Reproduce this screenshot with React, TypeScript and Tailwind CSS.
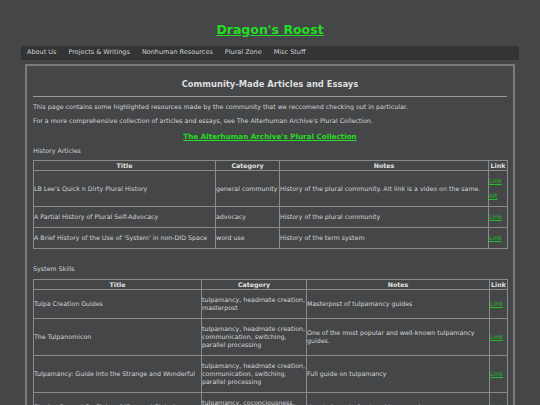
import React from "react";

type Row = {
  title: string;
  category: string;
  notes: string;
  links: string[];
};

const historyArticles: Row[] = [
  {
    title: "LB Lee's Quick n Dirty Plural History",
    category: "general community",
    notes: "History of the plural community. Alt link is a video on the same.",
    links: ["Link", "Alt"],
  },
  {
    title: "A Partial History of Plural Self-Advocacy",
    category: "advocacy",
    notes: "History of the plural community",
    links: ["Link"],
  },
  {
    title: "A Brief History of the Use of 'System' in non-DID Space",
    category: "word use",
    notes: "History of the term system",
    links: ["Link"],
  },
];

const systemSkills: Row[] = [
  {
    title: "Tulpa Creation Guides",
    category: "tulpamancy, headmate creation, masterpost",
    notes: "Masterpost of tulpamancy guides",
    links: ["Link"],
  },
  {
    title: "The Tulpanomicon",
    category: "tulpamancy, headmate creation, communication, switching, parallel processing",
    notes: "One of the most popular and well-known tulpamancy guides.",
    links: ["Link"],
  },
  {
    title: "Tulpamancy: Guide Into the Strange and Wonderful",
    category: "tulpamancy, headmate creation, communication, switching, parallel processing",
    notes: "Full guide on tulpamancy",
    links: ["Link"],
  },
  {
    title: 'Staying Present By Claire of "Ren and Claire"',
    category: "tulpamancy, coconciousness, switching",
    notes: "How to learn to front and be cocon longer",
    links: ["Link"],
  },
];

const navItems = ["About Us", "Projects & Writings", "Nonhuman Resources", "Plural Zone", "Misc Stuff"];

function ResourceTable({ rows, widths }: { rows: Row[]; widths: string[] }) {
  return (
    <table className="w-full table-fixed border-collapse border border-[#8a8a8a] text-left">
      <colgroup>
        {widths.map((w, i) => (
          <col key={i} className={w} />
        ))}
      </colgroup>
      <thead>
        <tr className="h-[10px] font-bold text-[#e0e0e0]">
          <th className="border border-[#8a8a8a] text-center leading-[8px]">Title</th>
          <th className="border border-[#8a8a8a] text-center leading-[8px]">Category</th>
          <th className="border border-[#8a8a8a] text-center leading-[8px]">Notes</th>
          <th className="border border-[#8a8a8a] text-center leading-[8px]">Link</th>
        </tr>
      </thead>
      <tbody>
        {rows.map((row) => (
          <tr key={row.title}>
            <td className="border border-[#8a8a8a] align-middle leading-[8px]">{row.title}</td>
            <td className="border border-[#8a8a8a] py-[6px] align-middle leading-[8px]">{row.category}</td>
            <td className="border border-[#8a8a8a] align-middle leading-[8px]">{row.notes}</td>
            <td className="border border-[#8a8a8a] py-[6px] align-middle leading-[8px]">
              <div className="flex flex-col gap-[7px]">
                {row.links.map((l) => (
                  <a key={l} href="#" className="text-[#1fbf1f] underline">
                    {l}
                  </a>
                ))}
              </div>
            </td>
          </tr>
        ))}
      </tbody>
    </table>
  );
}

export default function App() {
  return (
    <div className="min-h-screen bg-[#454648] pb-6 font-['DejaVu_Sans',Verdana,sans-serif] text-[6.3px] text-[#d4d4d4]">
      {/* --- SITE TITLE --- */}
      <header className="h-[46px] pt-[22px] text-center text-[12.5px] leading-[16px]">
        <a href="#" className="font-bold text-[#22dd22] underline">
          Dragon's Roost
        </a>
      </header>

      {/* --- NAV --- */}
      <nav className="mx-[21px] flex h-[14px] items-center gap-[12px] bg-[#333436] px-[6px] text-[6.5px] text-[#d0d0d0]">
        {navItems.map((item) => (
          <a key={item} href="#">
            {item}
          </a>
        ))}
      </nav>

      {/* --- CONTENT BOX --- */}
      <main className="mx-[25px] mt-[4px] border-2 border-[#7a7a7a] px-[6px] pt-[13px]">
        <h2 className="text-center text-[8.4px] font-bold leading-[11px] text-[#dedede]">
          Community-Made Articles and Essays
        </h2>
        <hr className="mt-[6px] border-t-[1.5px] border-[#9a9a9a]" />

        <p className="mt-[6px] leading-[8px]">
          This page contains some highlighted resources made by the community that we reccomend checking out in particular.
        </p>
        <p className="mt-[6px] leading-[8px]">
          For a more comprehensive collection of articles and essays, see The Alterhuman Archive's Plural Collection.
        </p>
        <p className="mt-[7px] text-center text-[7.2px] font-bold leading-[9px]">
          <a href="#" className="text-[#22dd22] underline">
            The Alterhuman Archive's Plural Collection
          </a>
        </p>

        <h3 className="mt-[6px] leading-[8px]">History Articles</h3>
        <div className="mt-[5px]">
          <ResourceTable rows={historyArticles} widths={["w-[182px]", "w-[64px]", "w-[209px]", "w-[19px]"]} />
        </div>

        <h3 className="mt-[16px] leading-[8px]">System Skills</h3>
        <div className="mt-[6px]">
          <ResourceTable rows={systemSkills} widths={["w-[168px]", "w-[105px]", "w-[183px]", "w-[18px]"]} />
        </div>
      </main>
    </div>
  );
}
